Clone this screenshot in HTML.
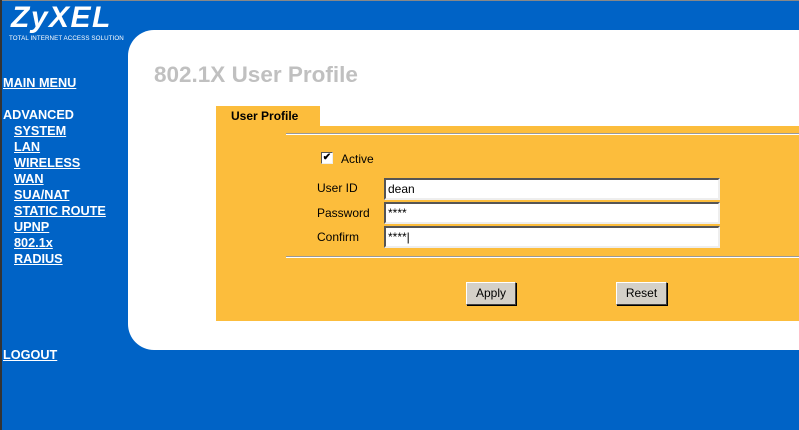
<!DOCTYPE html>
<html><head><style>
body{margin:0;width:799px;height:430px;background:#0063c6;position:relative;overflow:hidden;font-family:"Liberation Sans",Arial,sans-serif}
.a{position:absolute}
.nav{color:#fff;font-weight:bold;font-size:12.7px;text-decoration:underline;line-height:16px}
.lbl{font-size:12px;color:#000}
.inp{position:absolute;left:384px;width:330px;height:18px;background:#fff;border:2px solid;border-color:#555 #eee #eee #555;font-size:12px;line-height:18px;padding-left:2px;box-sizing:content-box}
.btn{position:absolute;height:21px;background:#d4d0c8;border:1px solid;border-color:#fff #404040 #404040 #fff;box-shadow:1px 1px 0 #000;font-size:12px;text-align:center;line-height:21px}
</style></head><body>
<div class="a" style="left:0;top:0;width:799px;height:1px;background:#888"></div>
<div class="a" style="left:0;top:0;width:2px;height:430px;background:#333"></div>
<div class="a" style="left:11px;top:1px;color:#fff;font-weight:bold;font-style:italic;font-size:30px;letter-spacing:1.5px">ZyXEL</div>
<div class="a" style="left:9px;top:35px;color:#fff;font-size:6.2px;letter-spacing:0.1px">TOTAL INTERNET ACCESS SOLUTION</div>
<div class="a" style="left:128px;top:30px;width:700px;height:320px;background:#fff;border-radius:26px 0 0 26px"></div>
<div class="a" style="left:154px;top:62px;color:#c0c0c0;font-weight:bold;font-size:22.5px">802.1X User Profile</div>
<div class="a nav" style="left:3px;top:75px">MAIN MENU</div>
<div class="a" style="left:3px;top:107px;color:#fff;font-weight:bold;font-size:12.7px;line-height:16px">ADVANCED</div>
<div class="a nav" style="left:14px;top:123px">SYSTEM<br>LAN<br>WIRELESS<br>WAN<br>SUA/NAT<br>STATIC ROUTE<br>UPNP<br>802.1x<br>RADIUS</div>
<div class="a nav" style="left:3px;top:347px">LOGOUT</div>
<div class="a" style="left:216px;top:106px;width:104px;height:20px;background:#fcbd3c"></div>
<div class="a" style="left:231px;top:109px;font-weight:bold;font-size:12px">User Profile</div>
<div class="a" style="left:216px;top:126px;width:583px;height:195px;background:#fcbd3c"></div>
<div class="a" style="left:286px;top:133px;width:513px;height:1px;background:#999;border-bottom:1px solid #fff"></div>
<div class="a" style="left:286px;top:256px;width:513px;height:1px;background:#999;border-bottom:1px solid #fff"></div>
<div class="a" style="left:321px;top:152px;width:10px;height:10px;background:#fff;border:1px solid;border-color:#555 #eee #eee #555;font-size:10px;line-height:10px;text-align:center;font-weight:bold">✔</div>
<div class="a lbl" style="left:341px;top:152px">Active</div>
<div class="a lbl" style="left:317px;top:181px">User ID</div>
<div class="a lbl" style="left:317px;top:206px">Password</div>
<div class="a lbl" style="left:317px;top:230px">Confirm</div>
<div class="inp" style="top:178px">dean</div>
<div class="inp" style="top:202px">****</div>
<div class="inp" style="top:226px">****|</div>
<div class="btn" style="left:466px;top:282px;width:48px">Apply</div>
<div class="btn" style="left:616px;top:282px;width:49px">Reset</div>
</body></html>
